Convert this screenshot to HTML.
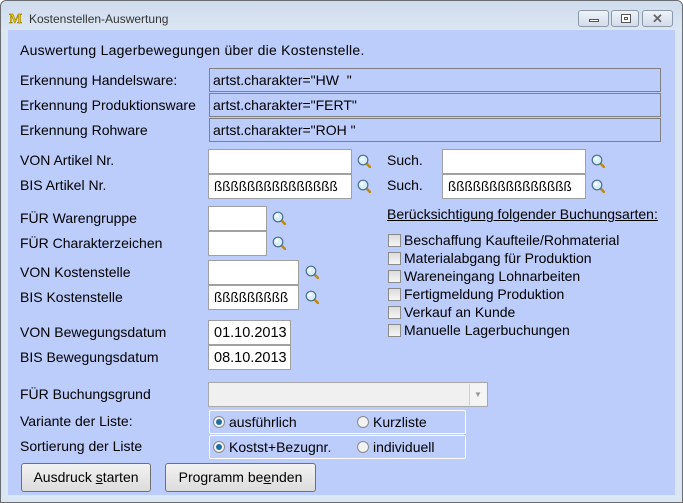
<!DOCTYPE html>
<html><head><meta charset="utf-8"><style>
*{margin:0;padding:0;box-sizing:border-box}
body{width:683px;height:503px;overflow:hidden;background:#fff;font-family:"Liberation Sans",Arial,sans-serif;font-size:14px;color:#000;position:relative}
.win{position:absolute;left:0;top:0;width:683px;height:503px;background:linear-gradient(#cfdced 0,#dbe6f3 30px,#dbe6f3);border:1px solid #6a6e73;border-radius:6px 6px 0 0}
.panel{position:absolute;left:8px;top:30px;width:667px;height:465px;background:#bccdfc}
.a{position:absolute;white-space:nowrap;line-height:16px}
.lbl{position:absolute;left:20px;white-space:nowrap;line-height:16px}
.box{position:absolute;left:209px;width:452px;height:24px;border:1px solid #808080;background:#bccdfc;padding:3px 0 0 3px;line-height:16px}
.in{position:absolute;height:25px;background:#fff;border:1px solid #a0a0a0;padding:4px 0 0 5px;font-size:13.5px;line-height:16px;overflow:hidden}
.mag{position:absolute;width:14px;height:14px}
.cb{position:absolute;left:388px;width:13px;height:13px;border:1px solid #8a8a8a;background:linear-gradient(#dcdcdc,#f6f6f6)}
.cbt{position:absolute;left:404px;line-height:16px;white-space:nowrap}
.grp{position:absolute;left:209px;width:257px;height:24px;border:1px solid #fff;border-radius:2px}
.rad{position:absolute;width:12px;height:12px;border-radius:50%;border:1px solid #8a8a8a;background:#f2f2f2}
.rad.on::after{content:"";position:absolute;left:2px;top:2px;width:6px;height:6px;border-radius:50%;background:#1f6fa3}
.btn{position:absolute;height:29px;border:1px solid #707070;border-radius:3px;background:linear-gradient(#f2f2f2,#dcdcdc);text-align:center;line-height:27px}
.tb{position:absolute;top:10px;height:17px;border:1px solid #8d99a8;border-radius:3px;background:linear-gradient(#eef3f9,#d2dcea)}
</style></head><body>
<div class="win"></div>
<svg class="a" style="left:9px;top:11px" width="18" height="14"><text x="0" y="12" font-family="Liberation Serif" font-weight="bold" font-size="14" fill="#e8c800" stroke="#806000" stroke-width="0.4">M</text></svg>
<div class="a" style="left:29px;top:11px;font-size:12px;color:#333">Kostenstellen-Auswertung</div>
<div class="tb" style="left:578px;width:31px"><div class="a" style="left:10px;top:8px;width:10px;height:3px;border:1px solid #555;background:#fff"></div></div>
<div class="tb" style="left:611px;width:28px"><div class="a" style="left:9px;top:3px;width:10px;height:9px;border:1px solid #555;background:#fff"><div class="a" style="left:2px;top:2px;width:4px;height:3px;border:1px solid #555"></div></div></div>
<div class="tb" style="left:642px;width:31px;text-align:center;font-size:13px;line-height:15px;color:#666;font-weight:bold">✕</div>
<div class="panel"></div>

<div class="lbl" style="top:42px;letter-spacing:0.25px">Auswertung Lagerbewegungen über die Kostenstelle.</div>
<div class="lbl" style="top:72px">Erkennung Handelsware:</div>
<div class="lbl" style="top:97px">Erkennung Produktionsware</div>
<div class="lbl" style="top:122px">Erkennung Rohware</div>
<div class="box" style="top:68px">artst.charakter="HW&nbsp; "</div>
<div class="box" style="top:93px">artst.charakter="FERT"</div>
<div class="box" style="top:118px">artst.charakter="ROH "</div>

<div class="lbl" style="top:152px">VON Artikel Nr.</div>
<div class="lbl" style="top:177px">BIS Artikel Nr.</div>
<div class="in" style="left:208px;top:149px;width:144px"></div>
<div class="in" style="left:208px;top:174px;width:144px">ßßßßßßßßßßßßßßß</div>
<div class="lbl" style="left:387px;top:152px">Such.</div>
<div class="lbl" style="left:387px;top:177px">Such.</div>
<div class="in" style="left:442px;top:149px;width:144px"></div>
<div class="in" style="left:442px;top:174px;width:144px">ßßßßßßßßßßßßßßß</div>

<div class="lbl" style="top:210px">FÜR Warengruppe</div>
<div class="lbl" style="top:235px">FÜR Charakterzeichen</div>
<div class="in" style="left:208px;top:206px;width:59px"></div>
<div class="in" style="left:208px;top:231px;width:59px"></div>

<div class="lbl" style="top:264px">VON Kostenstelle</div>
<div class="lbl" style="top:289px">BIS Kostenstelle</div>
<div class="in" style="left:208px;top:260px;width:91px"></div>
<div class="in" style="left:208px;top:285px;width:91px">ßßßßßßßßß</div>

<div class="lbl" style="top:324px">VON Bewegungsdatum</div>
<div class="lbl" style="top:349px">BIS Bewegungsdatum</div>
<div class="in" style="left:208px;top:320px;width:83px;font-size:14.5px">01.10.2013</div>
<div class="in" style="left:208px;top:345px;width:83px;font-size:14.5px">08.10.2013</div>

<div class="lbl" style="left:387px;top:206px;text-decoration:underline">Berücksichtigung folgender Buchungsarten:</div>
<div class="cb" style="top:234px"></div><div class="cbt" style="top:232px">Beschaffung Kaufteile/Rohmaterial</div>
<div class="cb" style="top:252px"></div><div class="cbt" style="top:250px">Materialabgang für Produktion</div>
<div class="cb" style="top:270px"></div><div class="cbt" style="top:268px">Wareneingang Lohnarbeiten</div>
<div class="cb" style="top:288px"></div><div class="cbt" style="top:286px">Fertigmeldung Produktion</div>
<div class="cb" style="top:306px"></div><div class="cbt" style="top:304px">Verkauf an Kunde</div>
<div class="cb" style="top:324px"></div><div class="cbt" style="top:322px">Manuelle Lagerbuchungen</div>

<div class="lbl" style="top:386px">FÜR Buchungsgrund</div>
<div class="a" style="left:208px;top:382px;width:280px;height:25px;background:#f0f0f0;border:1px solid #a8a8a8"><div class="a" style="right:1px;top:1px;width:17px;height:21px;border-left:1px solid #ccc;background:#f4f4f4;color:#999;font-size:8px;text-align:center;line-height:21px">▼</div></div>
<div class="lbl" style="top:413px">Variante der Liste:</div>
<div class="lbl" style="top:438px">Sortierung der Liste</div>
<div class="grp" style="top:410px"></div>
<div class="grp" style="top:435px"></div>
<div class="rad on" style="left:213px;top:416px"></div><div class="a" style="left:229px;top:414px">ausführlich</div>
<div class="rad" style="left:357px;top:416px"></div><div class="a" style="left:373px;top:414px">Kurzliste</div>
<div class="rad on" style="left:213px;top:441px"></div><div class="a" style="left:229px;top:439px">Kostst+Bezugnr.</div>
<div class="rad" style="left:357px;top:441px"></div><div class="a" style="left:373px;top:439px">individuell</div>

<div class="btn" style="left:21px;top:463px;width:130px">Ausdruck <u>s</u>tarten</div>
<div class="btn" style="left:165px;top:463px;width:151px">Programm be<u>e</u>nden</div>

<svg width="0" height="0" style="position:absolute"><defs><g id="m"><line x1="8" y1="8" x2="13" y2="13" stroke="#c08a10" stroke-width="2.6" stroke-linecap="round"/><circle cx="6" cy="6" r="4.8" fill="#d8eef8" stroke="#4a6f8a" stroke-width="1.2"/><circle cx="4.8" cy="4.8" r="1.6" fill="#fff"/></g></defs></svg>
<svg class="mag" style="left:357px;top:154px"><use href="#m"/></svg>
<svg class="mag" style="left:357px;top:179px"><use href="#m"/></svg>
<svg class="mag" style="left:591px;top:154px"><use href="#m"/></svg>
<svg class="mag" style="left:591px;top:179px"><use href="#m"/></svg>
<svg class="mag" style="left:272px;top:211px"><use href="#m"/></svg>
<svg class="mag" style="left:272px;top:236px"><use href="#m"/></svg>
<svg class="mag" style="left:305px;top:265px"><use href="#m"/></svg>
<svg class="mag" style="left:305px;top:290px"><use href="#m"/></svg>
</body></html>
